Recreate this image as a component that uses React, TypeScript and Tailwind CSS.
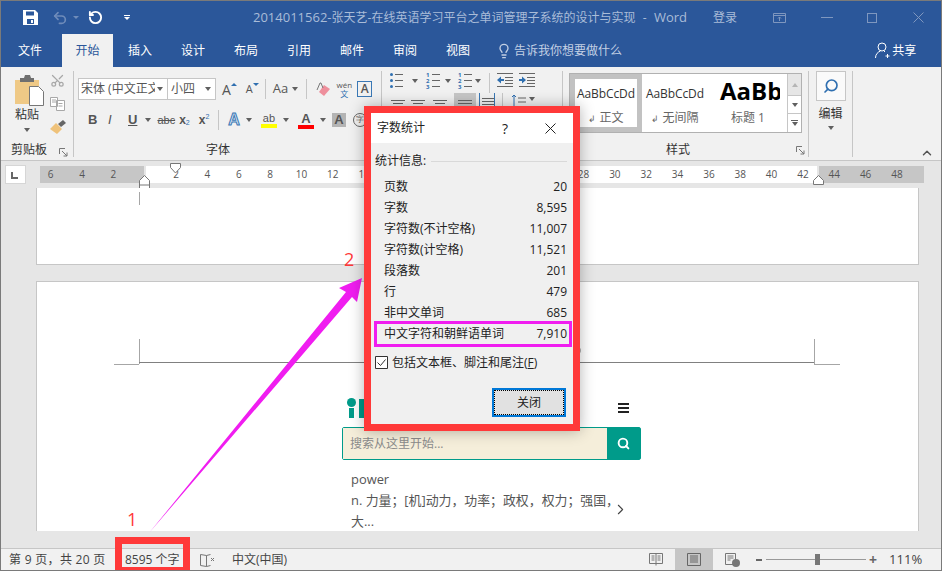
import React from "react";
import { Lightbulb, RotateCcw, Scissors, Search, ChevronRight, Undo2, ChevronUp } from "lucide-react";

const rulerMarks = ["6", "4", "2", "", "2", "4", "6", "8", "10", "12", "14", "16", "18", "20", "22", "24", "26", "28", "30", "32", "34", "36", "38", "40", "42", "44", "46", "48"];

const statRows = [
  ["页数", "20"],
  ["字数", "8,595"],
  ["字符数(不计空格)", "11,007"],
  ["字符数(计空格)", "11,521"],
  ["段落数", "201"],
  ["行", "479"],
  ["非中文单词", "685"],
];

const tabs = ["插入", "设计", "布局", "引用", "邮件", "审阅", "视图"];

const Caret = ({ className = "" }: { className?: string }) => (
  <span className={`inline-block h-0 w-0 border-x-[3.5px] border-t-[4px] border-x-transparent border-t-[#606060] ${className}`} />
);

const Launcher = () => (
  <svg width="9" height="9" viewBox="0 0 9 9" fill="none" stroke="#777">
    <path d="M.5 6V.5H6" />
    <path d="M3 3l5 5M8 4.5V8H4.5" />
  </svg>
);

const Lines = ({ widths, color = "#666" }: { widths: number[]; color?: string }) => (
  <div className="flex w-[15px] flex-col items-center gap-[2px] pt-[1px]">
    {widths.map((w, i) => (
      <div key={i} className="h-px" style={{ width: w, background: color }} />
    ))}
  </div>
);

const ListIcon = ({ num }: { num?: boolean }) => (
  <div className="flex w-[14px] flex-col gap-[3px]">
    {(num ? ["1", "2", "3"] : ["", "", ""]).map((n, i) => (
      <div key={i} className="flex h-[3px] items-center gap-[2px]">
        {num ? (
          <span className="w-[4px] text-[6px] leading-none font-bold text-[#2f6fb0]">{n}</span>
        ) : (
          <span className="h-[3px] w-[3px] rounded-full bg-[#2f6fb0]" />
        )}
        <span className="h-px w-[8px] bg-[#666]" />
      </div>
    ))}
  </div>
);

const IndentIcon = ({ flip }: { flip?: boolean }) => (
  <svg width="17" height="14" viewBox="0 0 17 14">
    <path d="M0 .5h16M8 4.5h8M8 7.5h8M8 10.5h8M0 13.5h16" stroke="#666" fill="none" />
    {flip ? <path d="M0 6h3V3.5L7 7l-4 3.500V8H0z" fill="#2f6fb0" /> : <path d="M7 6H4V3.500L0 7l4 3.500V8h3z" fill="#2f6fb0" />}
  </svg>
);

const Page = ({ children, className = "" }: { children?: React.ReactNode; className?: string }) => (
  <div className={`relative ml-[35px] w-[883px] border-x border-[#c6c6c6] bg-white ${className}`}>{children}</div>
);

export default function App() {
  return (
    <div className="relative flex h-[571px] w-[942px] flex-col overflow-hidden border border-[#7a7a7a] bg-[#e6e6e6] font-['Open_Sans','Noto_Sans_CJK_SC',sans-serif] text-[12px] text-[#333]">
      {/* title bar */}
      <div className="flex h-[33px] shrink-0 items-center bg-[#2b579a] text-[12px] text-[#a9bcd8]">
        <svg className="ml-[22px]" width="15" height="15" viewBox="0 0 15 15">
          <path d="M0 0h12l3 3v12H0z" fill="#fff" />
          <path d="M3 1.500h8v4H3zM4 9h7v5H4z" fill="#2b579a" />
          <path d="M8 10h2v3H8z" fill="#fff" />
        </svg>
        <Undo2 className="ml-[14px] text-[#6f8cba]" size={16} strokeWidth={2.5} />
        <span className="ml-[5px] h-0 w-0 border-x-[3px] border-t-[3px] border-x-transparent border-t-[#6f8cba]" />
        <RotateCcw className="ml-[9px] text-white" size={15} strokeWidth={3} />
        <div className="ml-[20px] flex w-[7px] flex-col items-center gap-[1px]">
          <div className="h-px w-[6px] bg-white" />
          <span className="h-0 w-0 border-x-[3px] border-t-[3px] border-x-transparent border-t-white" />
        </div>
        <div className="ml-[123px] flex w-[434px] items-center justify-between whitespace-pre">
          <span><span className="text-[13px]">2014011562-</span>张天艺-在线英语学习平台之单词管理子系统的设计与实现</span>
          <span>-</span>
          <span className="text-[13px]">Word</span>
        </div>
        <span className="ml-[26px]">登录</span>
        <svg className="ml-[36px]" width="13" height="10" viewBox="0 0 13 10" fill="none" stroke="#7f97bf">
          <path d="M.5.500h12v9H.5zM.5 2.500h12M6.500 8V4M5 5.500l1.500-1.500L8 5.500" />
        </svg>
        <div className="ml-[35px] h-px w-[12px] bg-[#7f97bf]" />
        <div className="ml-[34px] h-[10px] w-[10px] border border-[#7f97bf]" />
        <svg className="ml-[36px]" width="11" height="11" viewBox="0 0 11 11" stroke="#7f97bf">
          <path d="M.5.500l10 10M10.500.500l-10 10" />
        </svg>
      </div>

      {/* tabs */}
      <div className="flex h-[33px] shrink-0 items-center bg-[#2b579a] text-white">
        <span className="ml-[17px] w-[24px]">文件</span>
        <div className="ml-[20px] flex h-full w-[51px] items-center justify-center bg-[#f1f1f1] text-[#2b579a]">开始</div>
        <div className="flex gap-[29px] pl-[15px]">
          {tabs.map((t) => (
            <span key={t}>{t}</span>
          ))}
        </div>
        <Lightbulb className="ml-[26px] text-[#c3d0e4]" size={16} />
        <span className="ml-[2px] text-[#c3d0e4]">告诉我你想要做什么</span>
        <svg className="ml-[253px]" width="15" height="17" viewBox="0 0 15 17" fill="none" stroke="#fff">
          <circle cx="7" cy="5" r="4" />
          <path d="M.5 16c0-4 2.500-6 5-7M9 9l1 1M10.500 14h4M12.500 12v4" />
        </svg>
        <span className="ml-[2px]">共享</span>
      </div>

      {/* ribbon */}
      <div className="flex h-[94px] shrink-0 border-b border-[#c6c6c6] bg-[#f1f1f1] pt-[4px]">
        <div className="relative flex h-[86px] w-[73px] flex-col border-r border-[#c6c6c6]">
          <div className="flex flex-1">
            <div className="flex w-[49px] flex-col items-center pl-[7px] pt-[4px]">
              <svg width="29" height="31" viewBox="0 0 29 31">
                <path d="M0 5h24v24H0z" fill="#efc986" />
                <path d="M5 3h4l1-3h5l1 3h3v4H5z" fill="#6f6f6f" />
                <path d="M14.500 11.500h9l5 5v14h-14z" fill="#fff" stroke="#777" />
              </svg>
              <span className="mt-[1px] -ml-[4px] text-[12px] leading-[16px]">粘贴</span>
              <Caret className="mt-[5px] -ml-[4px]" />
            </div>
            <div className="flex flex-col items-start gap-[9px] pt-[2px]">
              <Scissors className="rotate-[-90deg] text-[#a8a8a8]" size={15} />
              <svg width="15" height="14" viewBox="0 0 15 14" fill="#fff" stroke="#a8a8a8">
                <path d="M.5.500h7v9h-7zM6.500 3.500h8v10h-8zM2 3h4M2 5h4M8.500 6.500h4M8.500 9h4" />
              </svg>
              <svg width="16" height="14" viewBox="0 0 16 14">
                <path d="M0 9l6-6 6 6-5 5z" fill="#efc27a" />
                <path d="M8 4l5-4 3 3-5 4z" fill="#666" />
              </svg>
            </div>
          </div>
          <span className="pl-[10px] leading-[14px]">剪贴板</span>
          <span className="absolute right-[5px] bottom-0 flex"><Launcher /></span>
        </div>

        {/* font */}
        <div className="flex h-[86px] w-[308px] flex-col border-r border-[#c6c6c6]">
          <div className="mt-[7px] flex h-[22px] items-center pl-[4px] text-[#555]">
            <div className="flex h-[22px] w-[90px] items-center justify-between border border-[#c6c6c6] bg-white pl-[2px] pr-[4px]">
              <span className="w-[74px] overflow-hidden whitespace-nowrap">宋体 (中文正文)</span>
              <Caret />
            </div>
            <div className="flex h-[22px] w-[48px] items-center justify-between border border-[#c6c6c6] border-l-0 bg-white pl-[3px] pr-[4px]">
              <span>小四</span>
              <Caret />
            </div>
            <span className="ml-[6px] text-[14px]">A</span>
            <span className="mb-[10px] h-0 w-0 border-x-[3px] border-b-[3px] border-x-transparent border-b-[#2f6fb0]" />
            <span className="ml-[9px] text-[11px]">A</span>
            <span className="mb-[10px] h-0 w-0 border-x-[3px] border-t-[3px] border-x-transparent border-t-[#2f6fb0]" />
            <div className="ml-[6px] h-[20px] w-px bg-[#c6c6c6]" />
            <span className="ml-[7px] text-[13px]">Aa</span>
            <Caret className="ml-[4px]" />
            <div className="ml-[8px] h-[20px] w-px bg-[#c6c6c6]" />
            <svg className="ml-[9px]" width="15" height="15" viewBox="0 0 15 15">
              <path d="M8 3l6 4-6 7-5-4z" fill="#ee8f9c" />
              <path d="M1 8l3-7h1l2 5" fill="none" stroke="#777" />
            </svg>
            <div className="ml-[5px] flex w-[16px] flex-col items-center text-[8px] leading-[9px]">
              <span>wén</span>
              <span className="text-[#2f6fb0]">文</span>
            </div>
            <div className="ml-[5px] flex h-[16px] w-[15px] items-center justify-center border border-[#3a78b5] text-[12px] font-semibold">A</div>
          </div>
          <div className="mt-[9px] flex h-[22px] items-center pl-[14px] font-['Liberation_Sans',sans-serif] text-[#555]">
            <span className="w-[20px] text-[13px] font-bold">B</span>
            <span className="w-[20px] text-[13px] italic">I</span>
            <span className="text-[13px] font-bold underline">U</span>
            <Caret className="ml-[8px]" />
            <span className="ml-[6px] text-[11px] line-through">abc</span>
            <span className="ml-[4px] text-[12px] font-bold">x</span>
            <span className="mt-[6px] text-[7px] text-[#2f6fb0]">2</span>
            <span className="ml-[9px] text-[12px] font-bold">x</span>
            <span className="mb-[6px] text-[7px] text-[#2f6fb0]">2</span>
            <div className="ml-[9px] h-[20px] w-px bg-[#c6c6c6]" />
            <span className="ml-[9px] text-[16px] font-bold text-[#dbe7f3] [-webkit-text-stroke:1px_#3a78b5]">A</span>
            <Caret className="ml-[6px]" />
            <div className="ml-[9px] flex flex-col items-center">
              <span className="text-[11px] leading-[12px]">ab</span>
              <div className="h-[4px] w-[16px] bg-[#ffff00]" />
            </div>
            <Caret className="ml-[6px]" />
            <div className="ml-[9px] flex flex-col items-center">
              <span className="text-[13px] leading-[13px] font-bold">A</span>
              <div className="h-[4px] w-[16px] bg-[#ff0000]" />
            </div>
            <Caret className="ml-[6px]" />
            <div className="ml-[6px] flex h-[14px] w-[14px] items-center justify-center bg-[#b4b4b4] text-[13px] font-bold">A</div>
            <div className="ml-[7px] flex h-[14px] w-[14px] items-center justify-center rounded-full border border-[#666] text-[8px]">字</div>
          </div>
          <span className="mt-auto pl-[132px] leading-[14px]">字体</span>
        </div>

        {/* paragraph */}
        <div className="flex h-[86px] w-[181px] flex-col border-r border-[#c6c6c6]">
          <div className="mt-[2px] flex h-[15px] items-start pl-[8px]">
            <ListIcon />
            <Caret className="mt-[6px] ml-[8px]" />
            <div className="ml-[8px]"><ListIcon num /></div>
            <Caret className="mt-[6px] ml-[5px]" />
            <div className="ml-[7px]"><ListIcon num /></div>
            <Caret className="mt-[6px] ml-[3px]" />
            <div className="ml-[8px] h-[20px] w-px bg-[#c6c6c6]" />
            <div className="ml-[7px]"><IndentIcon /></div>
            <div className="ml-[5px]"><IndentIcon flip /></div>
          </div>
          <div className="mt-[5px] flex h-[22px] pl-[6px]">
            <div className="flex w-[22px] pt-[6px] pl-[2px]"><Lines widths={[14, 10, 14]} /></div>
            <div className="flex w-[22px] pt-[6px]"><Lines widths={[14, 10, 14]} /></div>
            <div className="flex w-[22px] pt-[6px]"><Lines widths={[14, 10, 14]} /></div>
            <div className="flex w-[22px] items-start justify-center bg-[#c6c6c6] pt-[6px]"><Lines widths={[14, 14, 14]} /></div>
            <div className="ml-[3px] h-[22px] w-[16px] border-x border-[#3a78b5] pt-[4px]"><Lines widths={[12, 12, 12]} /></div>
            <div className="ml-[7px] h-[20px] w-px bg-[#c6c6c6]" />
            <svg className="ml-[8px] mt-[1px]" width="16" height="14" viewBox="0 0 16 14" fill="none">
              <path d="M3 12V1M1 3l2-2 2 2" stroke="#2f6fb0" />
              <path d="M7 4h8M7 8h8" stroke="#666" />
            </svg>
            <Caret className="mt-[4px] ml-[2px]" />
          </div>
        </div>

        {/* styles */}
        <div className="flex h-[86px] w-[246px] flex-col border-r border-[#c6c6c6] pl-[6px]">
          <div className="mt-[2px] flex h-[60px] w-[233px] border border-[#b1b1b1] bg-white">
            <div className="flex h-full w-[72px] flex-col items-center border-[5px] border-[#c2c2c2] pt-[6px] text-[12px]">
              <span className="leading-[18px] tracking-[-0.1px]">AaBbCcDd</span>
              <span className="mt-[6px] text-[#666]"><span className="text-[9px]">↲</span> 正文</span>
            </div>
            <div className="flex h-full w-[66px] flex-col items-center pt-[11px] text-[12px]">
              <span className="leading-[18px] tracking-[-0.1px]">AaBbCcDd</span>
              <span className="mt-[6px] whitespace-nowrap text-[#666]"><span className="text-[9px]">↲</span> 无间隔</span>
            </div>
            <div className="flex h-full w-[72px] flex-col items-start overflow-hidden pl-[12px] pt-[3px]">
              <span className="text-[24px] leading-[28px] font-bold whitespace-nowrap text-black">AaBb</span>
              <span className="mt-[4px] ml-[11px] whitespace-nowrap text-[#666]">标题 1</span>
            </div>
            <div className="ml-auto flex w-[14px] flex-col border-l border-[#c6c6c6]">
              <div className="flex h-[21px] items-center justify-center bg-[#e6e6e6]"><span className="h-0 w-0 border-x-[3.500px] border-b-[4px] border-x-transparent border-b-[#b5b5b5]" /></div>
              <div className="flex h-[19px] items-center justify-center border-y border-[#c6c6c6]"><Caret /></div>
              <div className="flex flex-1 flex-col items-center justify-center gap-[1px]"><div className="h-px w-[7px] bg-[#606060]" /><Caret /></div>
            </div>
          </div>
          <div className="mt-auto flex items-center">
            <span className="pl-[97px] leading-[14px]">样式</span>
            <span className="ml-[106px] flex"><Launcher /></span>
          </div>
        </div>

        {/* editing */}
        <div className="flex h-[86px] w-[44px] flex-col items-center border-r border-[#c6c6c6]">
          <div className="flex h-[30px] w-[30px] items-center justify-center border border-[#c6c6c6] bg-[#fafafa]">
            <Search className="-scale-x-100 text-[#2f6fb0]" size={16} strokeWidth={2.500} />
          </div>
          <span className="mt-[5px] leading-[16px]">编辑</span>
          <Caret className="mt-[4px]" />
        </div>
        <div className="flex flex-1 items-end justify-end pr-[7px]">
          <ChevronUp className="text-[#555]" size={14} strokeWidth={2.500} />
        </div>
      </div>

      {/* ruler */}
      <div className="flex h-[27px] shrink-0 items-start">
        <div className="mt-[4px] ml-[4px] h-[19px] w-[21px] border border-[#d6d6d6] bg-white p-[5px] pt-[6px]">
          <div className="h-[7px] w-[7px] border-b-2 border-l-2 border-[#666]" />
        </div>
        <div className="relative mt-[5px] ml-[14px] flex h-[17px] w-[884px] text-[10px] text-[#555]">
          <div className="h-full w-[104px] bg-[#c6c6c6]" />
          <div className="ml-[2px] h-full w-[671px] bg-white" />
          <div className="ml-[2px] h-full w-[105px] bg-[#c6c6c6]" />
          <div className="absolute top-0 -left-[5px] flex h-full items-center">
            {rulerMarks.map((m, i) => (
              <span key={i} className="w-[31.350px] text-center">{m}</span>
            ))}
          </div>
          <svg className="absolute -top-[3px] left-[130px]" width="12" height="11" viewBox="0 0 12 11" fill="#fff" stroke="#777">
            <path d="M.5.500h10v4L5.500 10 .5 4.500z" />
          </svg>
          <svg className="absolute top-[9px] left-[99px]" width="12" height="16" viewBox="0 0 12 16" fill="#fff" stroke="#777">
            <path d="M5.500.500l5 5v10H.5v-10zM.5 10h10" />
          </svg>
          <svg className="absolute top-[9px] left-[773px]" width="12" height="10" viewBox="0 0 12 10" fill="#fff" stroke="#777">
            <path d="M5.500.500l5 5v4H.5v-4z" />
          </svg>
        </div>
      </div>

      {/* document */}
      <div className="h-[360px] shrink-0 overflow-hidden">
        <Page className="h-[77px] border-b">
          <div className="absolute top-[4px] left-[102px] h-[13px] w-px bg-[#a6a6a6]" />
        </Page>
        <Page className="mt-[16px] h-[250px] border-t">
          <div className="absolute top-[57px] left-[102px] h-[25px] w-px bg-[#a6a6a6]" />
          <div className="absolute top-[82px] left-[77px] h-px w-[25px] bg-[#a6a6a6]" />
          <div className="absolute top-[80px] left-[102px] h-px w-[675px] bg-[#808080]" />
          <div className="absolute top-[57px] left-[777px] h-[25px] w-px bg-[#a6a6a6]" />
          <div className="absolute top-[82px] left-[777px] h-px w-[26px] bg-[#a6a6a6]" />
          <div className="absolute top-[64px] left-[535px] h-[9px] w-[9px] rounded-full border border-[#999]" />

          <div className="ml-[305px] w-[299px] pt-[115px]">
            <div className="flex h-[21px] items-center justify-between pr-[12px] pl-[5px]">
              <div className="flex items-end gap-[3px]">
                <div className="flex flex-col items-center">
                  <div className="h-[9px] w-[9px] rounded-full bg-[#009b8a]" />
                  <div className="mt-[1px] h-[10px] w-[5px] bg-[#009b8a]" />
                </div>
                <div className="h-[19px] w-[7px] bg-[#009b8a]" />
              </div>
              <div className="flex w-[11px] flex-col gap-[2px]">
                <div className="h-[2px] bg-[#222]" />
                <div className="h-[2px] bg-[#222]" />
                <div className="h-[2px] bg-[#222]" />
              </div>
            </div>
            <div className="mt-[9px] flex h-[33px] rounded-[2px] border border-[#009b8a]">
              <div className="flex flex-1 items-center bg-[#f5eeda] pl-[7px] text-[#8b8b8b]">搜索从这里开始...</div>
              <div className="flex w-[33px] items-center justify-center bg-[#009b8a]">
                <Search className="text-white" size={13} strokeWidth={3.500} />
              </div>
            </div>
            <div className="relative mt-[9px] pl-[9px] text-[12.900px] leading-[21px] text-[#555]">
              <p>power</p>
              <p className="whitespace-nowrap">n. 力量；[机]动力，功率；政权，权力；强国，</p>
              <p>大...</p>
              <ChevronRight className="absolute top-[32px] right-[12px] text-[#444]" size={17} strokeWidth={1.500} />
            </div>
          </div>
        </Page>
      </div>

      {/* status bar */}
      <div className="flex h-[22px] shrink-0 items-center border-t border-[#c6c6c6] bg-[#f1f1f1] text-[#444]">
        <span className="ml-[8px] w-[99px] tracking-[0.3px] whitespace-pre">第 9 页，共 20 页</span>
        <span className="ml-[17px] w-[57px] whitespace-pre">8595 个字</span>
        <svg className="ml-[18px]" width="15" height="14" viewBox="0 0 15 14" fill="none" stroke="#777">
          <path d="M.5 1.500l6 1v11l-6-1zM6.500 2.500l4-1M6.500 13.500l4-1M11 5l3 3M14 5l-3 3" />
        </svg>
        <span className="ml-[17px]">中文(中国)</span>
        <svg className="ml-[362px]" width="14" height="13" viewBox="0 0 14 13" fill="none" stroke="#777">
          <path d="M.5.500h13v10h-13zM7 .5v12M2.500 3h3M2.500 5h3M2.500 7h3M8.500 3h3M8.500 5h3M8.500 7h3" />
        </svg>
        <div className="ml-[12px] flex h-[21px] w-[38px] items-center justify-center bg-[#c6c6c6]">
          <svg width="14" height="13" viewBox="0 0 14 13" fill="none" stroke="#666">
            <path d="M.5.500h13v12h-13zM3 3h8M3 5h8M3 7h8M3 9h8" />
          </svg>
        </div>
        <svg className="ml-[12px]" width="15" height="14" viewBox="0 0 15 14">
          <path d="M.5.500h10v11H.5zM2.500 3h6M2.500 5h6M2.500 7h3" fill="none" stroke="#777" />
          <circle cx="11" cy="10" r="4" fill="#777" />
        </svg>
        <div className="ml-[16px] h-[2px] w-[6px] bg-[#666]" />
        <div className="relative ml-[4px] h-px w-[100px] bg-[#999]">
          <div className="absolute -top-[5px] left-[49px] h-[11px] w-[5px] bg-[#777]" />
        </div>
        <span className="ml-[3px] text-[14px] leading-none font-bold text-[#666]">+</span>
        <span className="ml-[12px] text-[13px]">111%</span>
      </div>

      {/* annotations over the window */}
      <div className="pointer-events-none absolute -top-px -left-px h-[571px] w-[942px]">
        <svg className="absolute top-0 left-0" width="942" height="571" viewBox="0 0 942 571">
          <path d="M362 278L357 302 352 297 149 533 346 292 339 288z" fill="#f01df0" />
        </svg>
        <span className="absolute top-[507px] left-[127px] text-[18px] leading-[24px] text-[#ff3939]">1</span>
        <span className="absolute top-[247px] left-[344px] text-[18px] leading-[24px] text-[#ff3939]">2</span>
        <div className="absolute top-[537px] left-[115px] h-[34px] w-[75px] border-[7px] border-b-[4px] border-[#ff3939]" />

        {/* word count dialog */}
        <div className="absolute top-[106px] left-[364px] flex h-[325px] w-[216px] flex-col border-[7px] border-[#ff3939] bg-[#f0f0f0] shadow-[0_0_14px_rgba(0,0,0,0.3)]">
          <div className="flex h-[30px] shrink-0 items-center bg-white pl-[6px] text-[#222]">
            <span>字数统计</span>
            <span className="ml-[77px] text-[14px]">?</span>
            <svg className="ml-[37px]" width="11" height="11" viewBox="0 0 11 11" stroke="#222">
              <path d="M.5.500l10 10M10.500.500l-10 10" />
            </svg>
          </div>
          <div className="flex flex-1 flex-col px-[3px] text-[#222]">
            <div className="mt-[11px] flex h-[14px] items-center pl-[1px]">
              <span className="leading-[14px]">统计信息:</span>
              <div className="ml-[5px] h-px w-[136px] bg-[#d9d9d9]" />
            </div>
            <div className="mt-[8px] flex flex-col">
              {statRows.map(([label, value]) => (
                <div key={label} className="flex h-[21px] items-center justify-between pr-[3px] pl-[10px]">
                  <span>{label}</span>
                  <span>{value}</span>
                </div>
              ))}
            </div>
            <div className="-mt-[2px] -mr-[2px] flex h-[26px] items-center justify-between border-[3px] border-[#f01df0] pr-[2px] pl-[7px]">
              <span>中文字符和朝鲜语单词</span>
              <span>7,910</span>
            </div>
            <div className="mt-[9px] flex h-[13px] items-center pl-[1px]">
              <svg width="13" height="13" viewBox="0 0 13 13" fill="#fff" stroke="#333">
                <path d="M.5.500h12v12H.5z" />
                <path d="M2.500 6.500l3 3 5-6" fill="none" />
              </svg>
              <span className="ml-[4px]">包括文本框、脚注和尾注(<span className="underline">F</span>)</span>
            </div>
            <div className="mt-[19px] mr-[4px] flex h-[29px] w-[74px] items-center justify-center self-end border-2 border-[#0078d7] bg-[#e1e1e1] outline-1 -outline-offset-3 outline-dotted outline-black">
              关闭
            </div>
          </div>
        </div>
      </div>
    </div>
  );
}
